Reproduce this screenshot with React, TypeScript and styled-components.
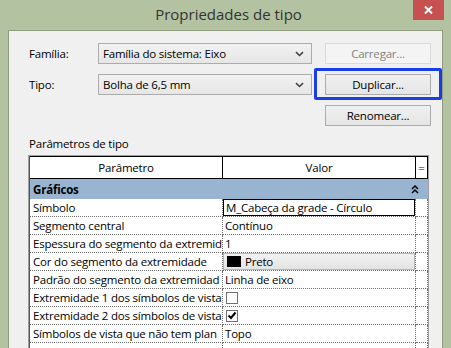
import React from "react";
import styled, { createGlobalStyle } from "styled-components";

const GlobalStyle = createGlobalStyle`
  html, body {
    margin: 0;
    padding: 0;
    background: #b3c2a1;
  }
  body {
    font-family: "Open Sans", "Noto Sans", sans-serif;
    font-size: 11.5px;
    letter-spacing: -0.2px;
    color: #000;
  }
`;

type Row = {
  label: string;
  value?: string;
  kind: "text" | "boxed" | "color" | "check";
  checked?: boolean;
};

const rows: Row[] = [
  { label: "Símbolo", value: "M_Cabeça da grade - Círculo", kind: "boxed" },
  { label: "Segmento central", value: "Contínuo", kind: "text" },
  { label: "Espessura do segmento da extremid", value: "1", kind: "text" },
  { label: "Cor do segmento da extremidade", value: "Preto", kind: "color" },
  { label: "Padrão do segmento da extremidad", value: "Linha de eixo", kind: "text" },
  { label: "Extremidade 1 dos símbolos de vista", kind: "check", checked: false },
  { label: "Extremidade 2 dos símbolos de vista", kind: "check", checked: true },
  { label: "Símbolos de vista que não tem plan", value: "Topo", kind: "text" },
];

const Window = styled.div`
  width: 451px;
  height: 348px;
  background: #b3c2a1;
  display: flex;
  flex-direction: column;
  overflow: hidden;
`;

const TitleBar = styled.div`
  height: 30px;
  display: grid;
  grid-template-columns: 45px 1fr 45px;
  align-items: start;
`;

const Title = styled.div`
  grid-column: 2;
  text-align: center;
  padding-top: 4px;
  padding-left: 6px;
  font-size: 15px;
  letter-spacing: 0;
  color: #333;
`;

const CloseButton = styled.div`
  grid-column: 3;
  justify-self: end;
  margin-right: 7px;
  width: 31px;
  height: 20px;
  background: #c75050;
  display: flex;
  align-items: center;
  justify-content: center;
`;

const Client = styled.div`
  flex: 1;
  margin: 0 8px;
  border: 1px solid #8e9b80;
  border-bottom: none;
  background: #f0f0f0;
  padding: 12px 11px 0 20px;
  display: flex;
  flex-direction: column;
  min-height: 0;
`;

const TopGrid = styled.div`
  display: grid;
  grid-template-columns: 56px 214px 106px;
  column-gap: 13px;
  grid-auto-rows: 21px;
  row-gap: 10px;
  align-items: center;
`;

const Label = styled.div`
  white-space: nowrap;
`;

const Combo = styled.div`
  height: 21px;
  box-sizing: border-box;
  border: 1px solid #acacac;
  background: linear-gradient(#f2f2f2, #e6e6e6);
  display: flex;
  align-items: center;
  justify-content: space-between;
  padding: 0 7px 0 4px;
`;

const Button = styled.div<{ $disabled?: boolean }>`
  height: 21px;
  box-sizing: border-box;
  border: 1px solid ${(p) => (p.$disabled ? "#d9d9d9" : "#acacac")};
  background: ${(p) => (p.$disabled ? "#f4f4f4" : "linear-gradient(#f0f0f0, #e5e5e5)")};
  color: ${(p) => (p.$disabled ? "#838383" : "#000")};
  display: flex;
  align-items: center;
  justify-content: center;
`;

const Focused = styled.div`
  margin: -6px -11px -5px -11px;
  padding: 3px 8px 2px 8px;
  border: 3px solid #1a3ee6;
  border-radius: 2px;
`;

const SectionLabel = styled.div`
  margin-top: 8px;
  height: 19px;
  line-height: 19px;
`;

const TableFrame = styled.div`
  margin-top: 2px;
  margin-left: -1px;
  width: 401px;
  flex: 1;
  border: 1px solid #a0a0a0;
  border-bottom: none;
  box-sizing: border-box;
  min-height: 0;
`;

const Grid = styled.div`
  width: 399px;
  height: 100%;
  display: grid;
  grid-template-columns: 193px 193px 12px;
  grid-template-rows: 23px 20px repeat(8, 18px) 1fr;
  border-left: 1px solid #555;
  box-sizing: border-box;
`;

const HeadCell = styled.div`
  box-sizing: border-box;
  border-top: 1px solid #000;
  border-bottom: 1px solid #000;
  border-right: 1px solid #000;
  background: #fff;
  display: flex;
  align-items: center;
  justify-content: center;
`;

const GroupRow = styled.div`
  grid-column: 1 / 4;
  background: #99b4d1;
  display: flex;
  align-items: center;
  justify-content: space-between;
  padding: 0 9px 0 3px;
  font-weight: bold;
`;

const Cell = styled.div<{ $pad?: number }>`
  box-sizing: border-box;
  background: #fff;
  border-right: 1px dotted #6d6d6d;
  border-bottom: 1px dotted #6d6d6d;
  padding-left: ${(p) => p.$pad ?? 3}px;
  display: flex;
  align-items: center;
  white-space: nowrap;
  overflow: hidden;
`;

const FillerCol = styled.div`
  background: #fff;
  border-right: 1px dotted #6d6d6d;
`;

const BoxedValue = styled.div`
  flex: 1;
  align-self: stretch;
  box-sizing: border-box;
  border: 1px solid #000;
  background: #fff;
  padding-left: 2px;
  display: flex;
  align-items: center;
`;

const ColorValue = styled.div`
  flex: 1;
  height: 17px;
  box-sizing: border-box;
  border: 1px solid #b5b5b5;
  background: linear-gradient(#f2f2f2, #e4e4e4);
  display: flex;
  align-items: center;
  gap: 4px;
  padding-left: 3px;
`;

const Swatch = styled.span`
  width: 14px;
  height: 11px;
  background: #000;
`;

const CheckBox = styled.span`
  width: 12px;
  height: 12px;
  box-sizing: border-box;
  border: 1px solid #707070;
  background: #fff;
  display: flex;
  align-items: center;
  justify-content: center;
`;

const Chevron = () => (
  <svg width="9" height="6" viewBox="0 0 9 6">
    <path d="M1 1.2 L4.5 4.5 L8 1.2" fill="none" stroke="#444" strokeWidth="1.6" />
  </svg>
);

const DoubleUp = () => (
  <svg width="8" height="9" viewBox="0 0 8 9">
    <path d="M1 4 L4 1 L7 4 M1 8 L4 5 L7 8" fill="none" stroke="#000" strokeWidth="1.5" />
  </svg>
);

const CloseX = () => (
  <svg width="9" height="8" viewBox="0 0 9 8">
    <path d="M1 0.5 L8 7.5 M8 0.5 L1 7.5" stroke="#fff" strokeWidth="2" />
  </svg>
);

const Tick = () => (
  <svg width="10" height="9" viewBox="0 0 10 9">
    <path d="M1.5 4.5 L4 7 L8.5 1.5" fill="none" stroke="#000" strokeWidth="2" />
  </svg>
);

const renderValue = (row: Row) => {
  switch (row.kind) {
    case "boxed":
      return <BoxedValue>{row.value}</BoxedValue>;
    case "color":
      return (
        <ColorValue>
          <Swatch />
          {row.value}
        </ColorValue>
      );
    case "check":
      return <CheckBox>{row.checked && <Tick />}</CheckBox>;
    default:
      return row.value;
  }
};

const App: React.FC = () => {
  return (
    <Window>
      <GlobalStyle />
      <TitleBar>
        <Title>Propriedades de tipo</Title>
        <CloseButton>
          <CloseX />
        </CloseButton>
      </TitleBar>
      <Client>
        <TopGrid>
          <Label>Família:</Label>
          <Combo>
            Família do sistema: Eixo
            <Chevron />
          </Combo>
          <Button $disabled>Carregar...</Button>

          <Label>Tipo:</Label>
          <Combo>
            Bolha de 6,5 mm
            <Chevron />
          </Combo>
          <Focused>
            <Button>Duplicar...</Button>
          </Focused>

          <span />
          <span />
          <Button>Renomear...</Button>
        </TopGrid>
        <SectionLabel>Parâmetros de tipo</SectionLabel>
        <TableFrame>
          <Grid>
            <HeadCell>Parâmetro</HeadCell>
            <HeadCell>Valor</HeadCell>
            <HeadCell>=</HeadCell>
            <GroupRow>
              Gráficos
              <DoubleUp />
            </GroupRow>
            {rows.map((row) => (
              <React.Fragment key={row.label}>
                <Cell>{row.label}</Cell>
                <Cell $pad={row.kind === "text" ? 2 : row.kind === "check" ? 3 : 0}>
                  {renderValue(row)}
                </Cell>
                <Cell />
              </React.Fragment>
            ))}
            <FillerCol />
            <FillerCol />
            <FillerCol />
          </Grid>
        </TableFrame>
      </Client>
    </Window>
  );
};

export default App;
